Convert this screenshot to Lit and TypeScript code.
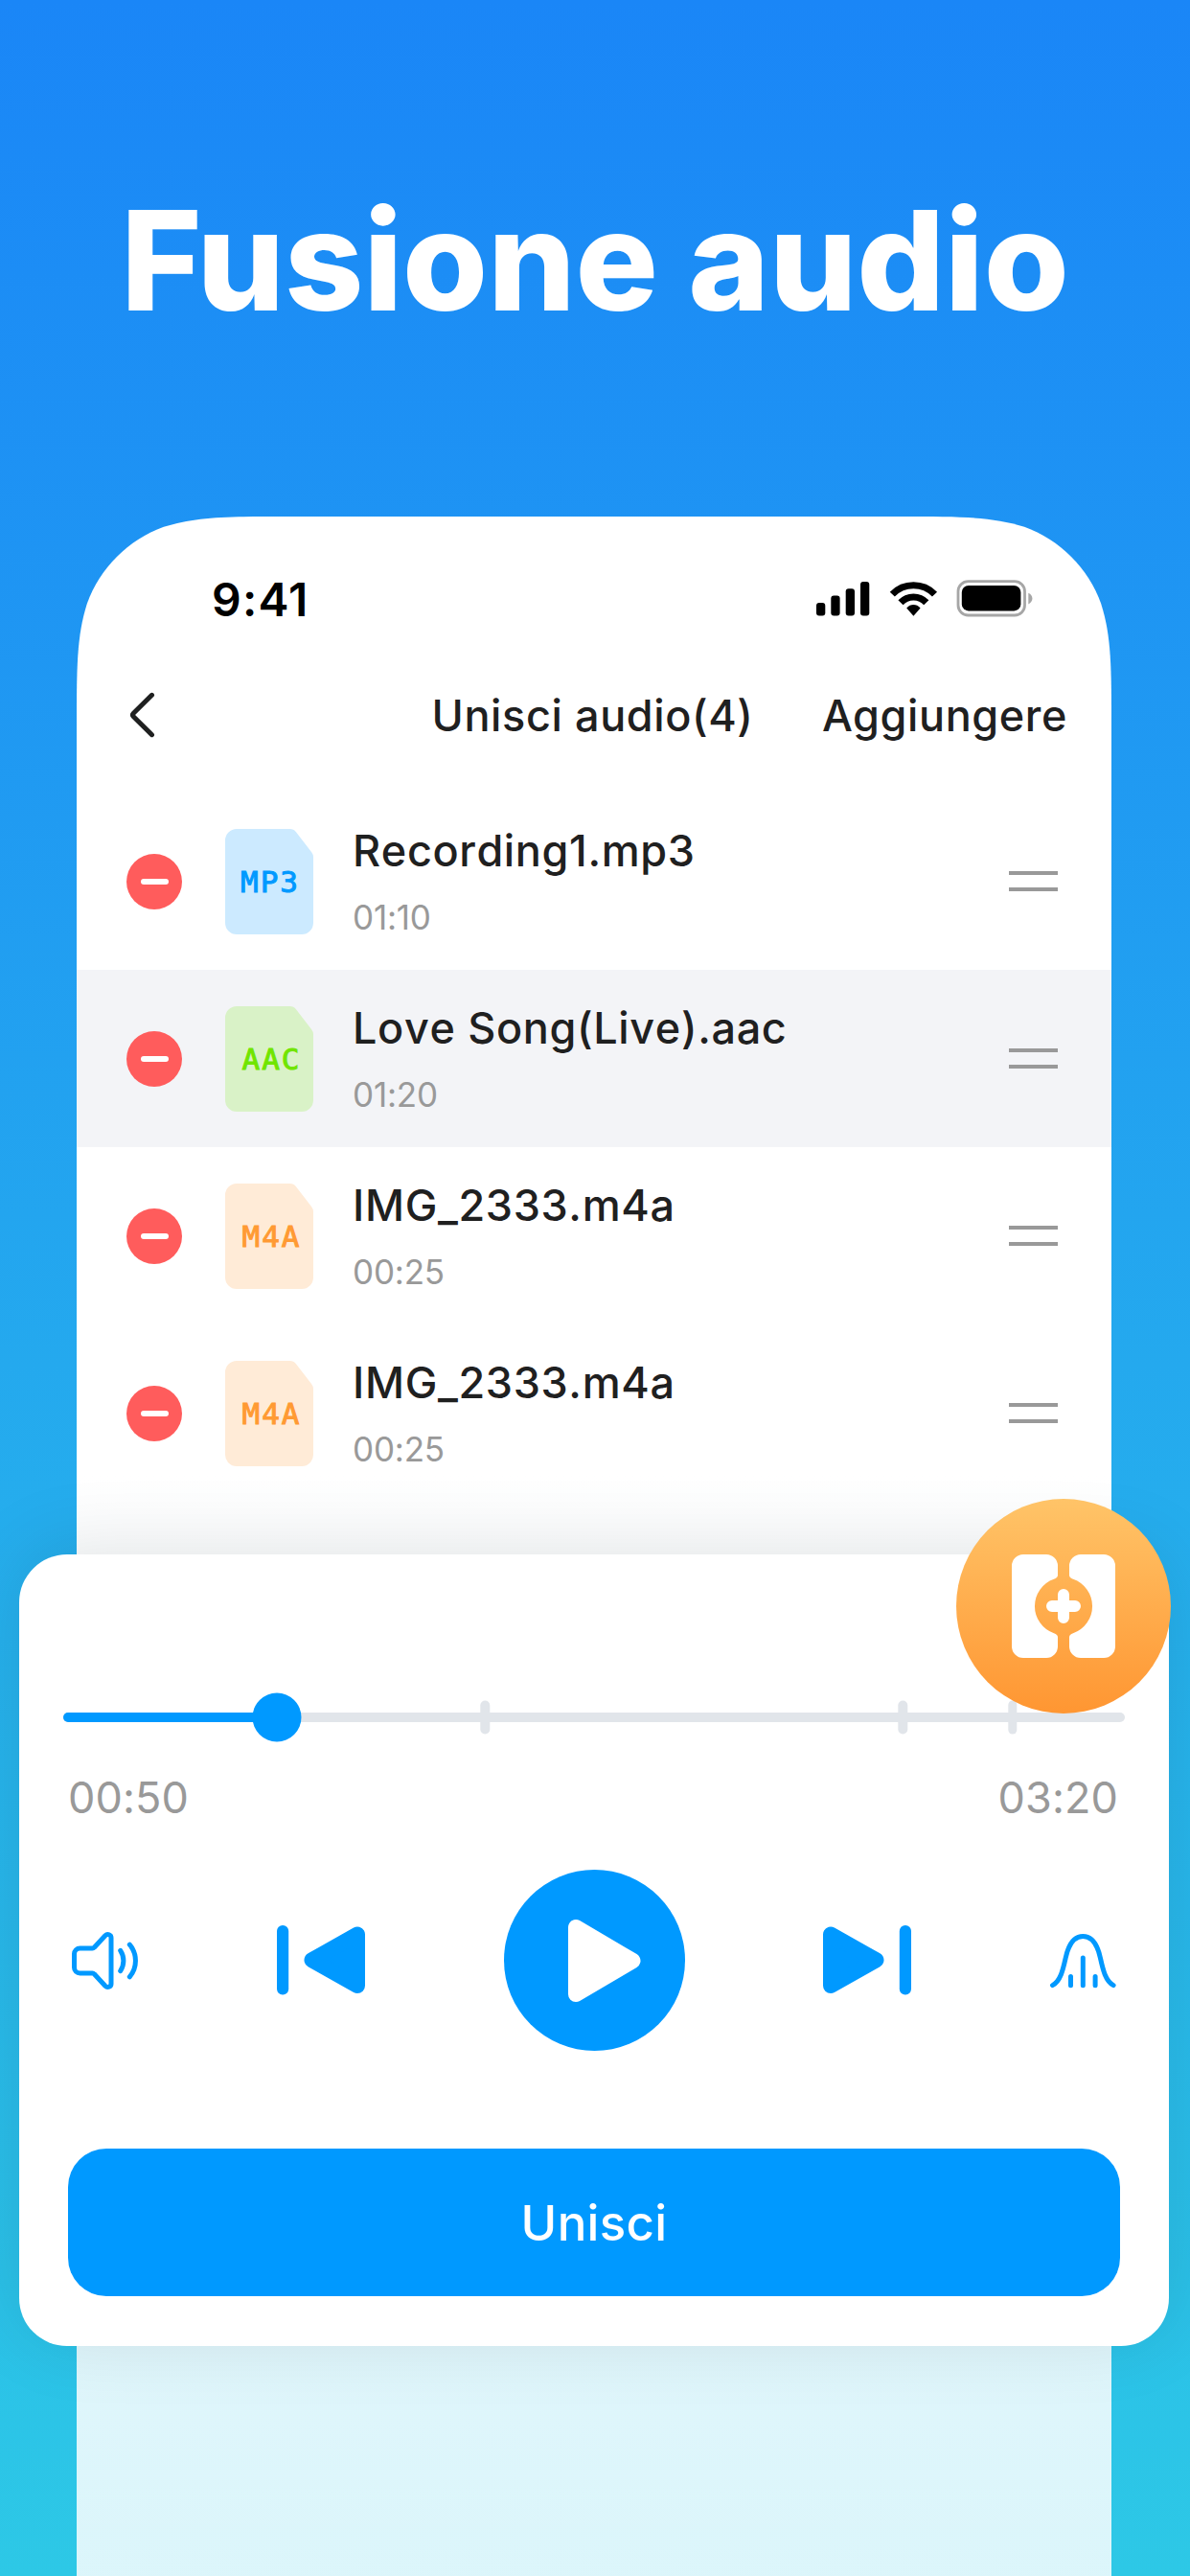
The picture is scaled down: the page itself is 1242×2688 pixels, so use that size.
import { LitElement, html, css } from "lit";
import { customElement, property } from "lit/decorators.js";

interface Track {
  name: string;
  time: string;
  type: "mp3" | "aac" | "m4a";
  active?: boolean;
}

const TRACKS: Track[] = [
  { name: "Recording1.mp3", time: "01:10", type: "mp3" },
  { name: "Love Song(Live).aac", time: "01:20", type: "aac", active: true },
  { name: "IMG_2333.m4a", time: "00:25", type: "m4a" },
  { name: "IMG_2333.m4a", time: "00:25", type: "m4a" },
];

@customElement("track-row")
export class TrackRow extends LitElement {
  @property({ type: String }) name = "";
  @property({ type: String }) time = "";
  @property({ type: String }) type: "mp3" | "aac" | "m4a" = "mp3";
  @property({ type: Boolean }) active = false;

  static styles = css`
    :host {
      display: block;
    }

    .row {
      display: flex;
      align-items: center;
      height: 185px;
      box-sizing: border-box;
      padding: 0 56px 0 52px;
    }

    .row.active {
      background: #f3f4f7;
    }

    .remove {
      width: 58px;
      height: 58px;
      border-radius: 50%;
      background: #ff5c5c;
      display: grid;
      place-items: center;
    }

    .remove::after {
      content: "";
      width: 29px;
      height: 6px;
      border-radius: 3px;
      background: #fff;
    }

    .file {
      display: grid;
      place-items: center;
      width: 92px;
      height: 110px;
      margin: 0 41px 0 45px;
    }

    .file > * {
      grid-area: 1 / 1;
    }

    .file svg {
      display: block;
    }

    .tag {
      padding-left: 2px;
      font-family: "DejaVu Sans Mono", monospace;
      font-size: 31px;
      line-height: 40px;
      letter-spacing: 2px;
      text-transform: uppercase;
      -webkit-text-stroke: 1px currentColor;
    }

    .mp3 {
      fill: #cceaff;
      color: #0099ff;
    }

    .aac {
      fill: #d9f2c7;
      color: #70e500;
    }

    .m4a {
      fill: #ffebd7;
      color: #ff9a33;
    }

    .aac .tag,
    .m4a .tag {
      padding-left: 5px;
    }

    .info {
      flex: 1;
      display: flex;
      flex-direction: column;
      gap: 22px;
      font-kerning: none;
    }

    .name {
      font-size: 45px;
      line-height: 54px;
      font-weight: 500;
      letter-spacing: 0.65px;
      color: #1f2020;
    }

    .time {
      font-size: 35px;
      line-height: 41px;
      letter-spacing: -0.2px;
      color: #999;
    }

    .handle {
      width: 51px;
      height: 13px;
      border: solid #999;
      border-width: 4.5px 0;
    }
  `;

  render() {
    return html`
      <div class="row ${this.active ? "active" : ""}">
        <div class="remove"></div>
        <div class="file ${this.type}">
          <svg width="92" height="110" viewBox="0 0 92 110">
            <path d="M12 0H67.5Q71.5 0 74 3.3L90 24Q92 26.5 92 29.5V98a12 12 0 0 1-12 12H12A12 12 0 0 1 0 98V12A12 12 0 0 1 12 0Z" />
          </svg>
          <span class="tag">${this.type}</span>
        </div>
        <div class="info">
          <span class="name">${this.name}</span>
          <span class="time">${this.time}</span>
        </div>
        <div class="handle"></div>
      </div>
    `;
  }
}

@customElement("merge-player")
export class MergePlayer extends LitElement {
  @property({ type: String }) position = "00:50";
  @property({ type: String }) duration = "03:20";
  @property({ type: Number }) progress = 20.1;
  @property({ attribute: false }) marks = [39.75, 79.1, 89.45];

  static styles = css`
    :host {
      display: block;
    }

    .card {
      position: relative;
      box-sizing: border-box;
      height: 825.5px;
      padding: 144px 46px 0;
      border-radius: 50px;
      background: #fff;
      box-shadow: 0 -8px 80px rgba(0, 0, 0, 0.1);
    }

    .badge {
      position: absolute;
      top: -58px;
      right: -2px;
      width: 224px;
      height: 224px;
      border-radius: 50%;
      background: linear-gradient(#ffc468, #ff9632);
      display: grid;
      place-items: center;
    }

    .slider {
      position: relative;
      height: 52px;
      display: flex;
      align-items: center;
    }

    .track {
      width: 100%;
      height: 10px;
      border-radius: 5px;
      background: #e1e5ea;
      overflow: hidden;
    }

    .played {
      height: 100%;
      background: #0099ff;
    }

    /* markers and thumb sit on top of the track */
    .mark,
    .thumb {
      position: absolute;
      top: 50%;
      transform: translate(-50%, -50%);
    }

    .mark {
      width: 9.4px;
      height: 35px;
      border-radius: 5px;
      background: #e1e5ea;
    }

    .thumb {
      width: 51px;
      height: 51px;
      border-radius: 50%;
      background: #0099ff;
    }

    .times {
      display: flex;
      justify-content: space-between;
      margin-top: 31px;
      padding: 0 7px 0 5px;
      font-size: 45px;
      line-height: 54px;
      letter-spacing: 0.1px;
      color: #999;
    }

    .controls {
      display: flex;
      align-items: center;
      justify-content: space-between;
      margin-top: 48px;
      padding: 0 9px;
      color: #0099ff;
    }

    .controls svg {
      display: block;
      overflow: visible;
    }

    .line {
      fill: none;
      stroke: currentColor;
      stroke-width: 5;
      stroke-linecap: round;
      stroke-linejoin: round;
    }

    .solid {
      fill: currentColor;
      stroke: currentColor;
      stroke-width: 16;
      stroke-linejoin: round;
    }

    .play {
      width: 189px;
      height: 189px;
      border-radius: 50%;
      background: #0099ff;
      color: #fff;
      display: flex;
      align-items: center;
      box-sizing: border-box;
      padding-left: 67px;
    }

    .merge {
      display: grid;
      place-items: center;
      height: 154px;
      margin: 102px 5px 0;
      border-radius: 40px;
      background: #0099ff;
      color: #fff;
      font-size: 51px;
      font-weight: 500;
      letter-spacing: 0.3px;
    }
  `;

  render() {
    return html`
      <div class="card">
        <div class="slider">
          <div class="track">
            <div class="played" style="width: ${this.progress}%"></div>
          </div>
          ${this.marks.map(
            (mark) => html`<div class="mark" style="left: ${mark}%"></div>`
          )}
          <div class="thumb" style="left: ${this.progress}%"></div>
        </div>
        <div class="times">
          <span>${this.position}</span>
          <span>${this.duration}</span>
        </div>
        <div class="controls">
          <svg class="line" width="69" height="60" viewBox="0 0 69 60">
            <path d="M8.5 17H21.5Q22.6 17 23.3 16.2L34.8 3.7C37.2 1.3 41 2.8 41 6V54C41 57.2 37.2 58.7 34.8 56.3L23.3 43.8Q22.6 43 21.5 43H8.5A6 6 0 0 1 2.5 37V23A6 6 0 0 1 8.5 17Z" />
            <path d="M50.7 19.4A19.3 19.3 0 0 1 50.7 40.6" />
            <path d="M60.3 13.2A26 26 0 0 1 60.3 46.8" />
          </svg>
          <svg width="92" height="73" viewBox="0 0 92 73">
            <rect x="0" y="0" width="12.2" height="72.6" rx="6" fill="currentColor" />
            <path class="solid" d="M84 9.5V63.1L36.5 36.3Z" />
          </svg>
          <div class="play">
            <svg width="76" height="86" viewBox="0 0 76 86">
              <path class="solid" d="M8 8V78L67.5 43Z" />
            </svg>
          </div>
          <svg width="92" height="73" viewBox="0 0 92 73">
            <path class="solid" d="M8 9.5V63.1L55.5 36.3Z" />
            <rect x="79.8" y="0" width="12.2" height="72.6" rx="6" fill="currentColor" />
          </svg>
          <svg class="line" width="69" height="56" viewBox="0 0 69 56">
            <path d="M2.5 53.6C11 49 13.5 37 16.2 25C19.2 11 24.5 2.5 34.3 2.5C44.1 2.5 49.4 11 52.4 25C55.1 37 57.6 49 66.1 53.6" />
            <path d="M21.5 44.5V53.7M34.3 25V53.7M47.1 44.5V53.7" />
          </svg>
        </div>
        <div class="merge">Unisci</div>
        <div class="badge">
          <svg width="108" height="108" viewBox="0 0 108 108" fill="#fff">
            <path d="M12 0H36A12 12 0 0 1 48 12V21.5Q48 24.5 44 25.7A30 30 0 0 0 44 82.3Q48 83.5 48 86.5V96A12 12 0 0 1 36 108H12A12 12 0 0 1 0 96V12A12 12 0 0 1 12 0Z" />
            <path d="M96 0H72A12 12 0 0 0 60 12V21.5Q60 24.5 64 25.7A30 30 0 0 1 64 82.3Q60 83.5 60 86.5V96A12 12 0 0 0 72 108H96A12 12 0 0 0 108 96V12A12 12 0 0 0 96 0Z" />
            <path d="M54 42V66M42 54H66" stroke="#fff" stroke-width="12" stroke-linecap="round" />
          </svg>
        </div>
      </div>
    `;
  }
}

@customElement("app-root")
export class AppRoot extends LitElement {
  static styles = css`
    :host {
      display: block;
      font-family: Inter, "Liberation Sans", sans-serif;
    }

    .page {
      box-sizing: border-box;
      width: 1242px;
      height: 2688px;
      padding-top: 192px;
      overflow: hidden;
      background: linear-gradient(#1a86f7, #2dc8e6);
    }

    h1 {
      margin: 0 0 187px;
      font-size: 144px;
      line-height: 160px;
      font-weight: 800;
      letter-spacing: -0.1px;
      text-align: center;
      color: #fff;
    }

    /* phone and player share one cell, the player lies over the phone */
    .stage {
      display: grid;
    }

    .stage > * {
      grid-area: 1 / 1;
    }

    .phone {
      height: 2149px;
      margin: 0 82px 0 80px;
      background: linear-gradient(
        #fff 1000px,
        rgba(255, 255, 255, 0.85) 1900px,
        rgba(255, 255, 255, 0.83)
      );
      /* continuous corners */
      clip-path: path(
        "M0 2149V220.1C0 156.7 0 125.1 10.8 90.9C24.3 53.7 53.7 24.3 90.9 10.8C125.1 0 156.7 0 220.1 0H859.9C923.3 0 954.9 0 989.1 10.8C1026.3 24.3 1055.7 53.7 1069.2 90.9C1080 125.1 1080 156.7 1080 220.1V2149Z"
      );
    }

    .status {
      display: flex;
      align-items: center;
      justify-content: space-between;
      height: 58px;
      padding: 57px 82px 0 141px;
      font-size: 48px;
      font-weight: 600;
      letter-spacing: 1.2px;
      color: #000;
    }

    .nav {
      display: grid;
      grid-template-columns: 1fr auto 1fr;
      align-items: center;
      height: 114px;
      padding: 35px 46px 24px 54px;
      font-size: 45px;
      font-weight: 500;
      letter-spacing: 0.6px;
      color: #1f2020;
    }

    .title {
      margin-right: 11px;
    }

    .add {
      justify-self: end;
    }

    svg {
      display: block;
    }

    merge-player {
      margin: 1083px 22px 0 20px;
    }
  `;

  render() {
    return html`
      <div class="page">
        <h1>Fusione audio</h1>
        <div class="stage">
          <div class="phone">
            <div class="status">
              <span>9:41</span>
              <svg width="226" height="40" viewBox="0 0 226 40">
                <rect x="0" y="24" width="9.3" height="13.5" rx="3" />
                <rect x="15.3" y="16.5" width="9.3" height="21" rx="3" />
                <rect x="30.7" y="9.3" width="9.3" height="28.2" rx="3" />
                <rect x="46" y="2" width="9.3" height="35.5" rx="3" />
                <g fill="none" stroke="#000" stroke-width="7.1">
                  <path d="M79.3 15.1A30.8 30.8 0 0 1 123.5 15.1" />
                  <path d="M88 23.8A18.4 18.4 0 0 1 114.8 23.8" />
                </g>
                <path d="M101.4 37.8L94.2 29.4C98.2 24.9 104.6 24.9 108.6 29.4Z" />
                <rect x="148" y="1.6" width="69.5" height="35.4" rx="10.5" fill="none" stroke="#a6a6a6" stroke-width="2.8" />
                <rect x="151.8" y="6" width="61.6" height="26.4" rx="7" />
                <path d="M221.3 13.8C226.8 16 226.8 23.2 221.3 25.4Z" fill="#a6a6a6" />
              </svg>
            </div>
            <div class="nav">
              <svg width="28" height="48" viewBox="0 0 28 48" fill="none" stroke="#1f2020" stroke-width="5" stroke-linecap="round" stroke-linejoin="round">
                <path d="M24.5 3.3L5.3 22.3Q3.6 24 5.3 25.7L24.5 44.7" />
              </svg>
              <span class="title">Unisci audio(4)</span>
              <span class="add">Aggiungere</span>
            </div>
            ${TRACKS.map(
              (track) => html`
                <track-row
                  name=${track.name}
                  time=${track.time}
                  type=${track.type}
                  ?active=${track.active}
                ></track-row>
              `
            )}
          </div>
          <merge-player></merge-player>
        </div>
      </div>
    `;
  }
}

declare global {
  interface HTMLElementTagNameMap {
    "track-row": TrackRow;
    "merge-player": MergePlayer;
    "app-root": AppRoot;
  }
}
